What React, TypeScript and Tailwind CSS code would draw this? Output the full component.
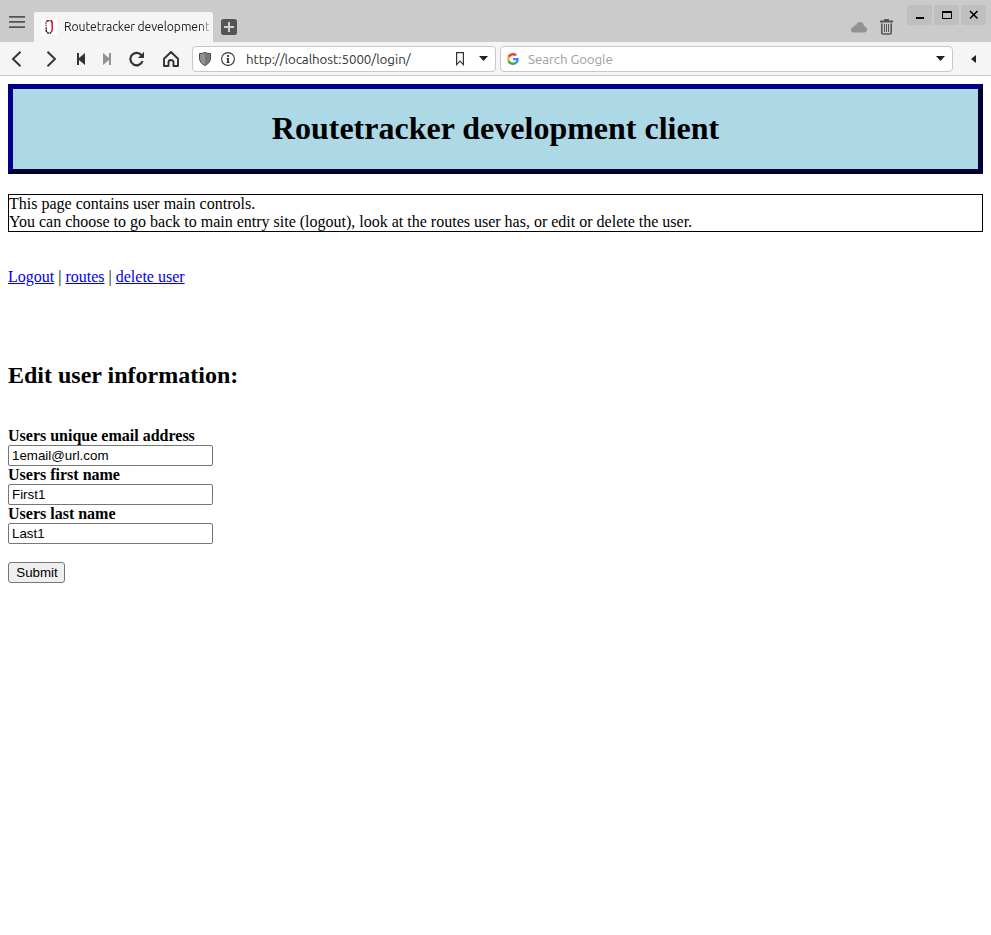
import React from "react";

const uiFont = "font-['Ubuntu','Noto_Sans',sans-serif]";

function TabBar() {
  return (
    <div className="flex h-[42px] w-full items-start bg-[#cbcbcb]">
      <svg className="mt-4 ml-[9px] h-3 w-4 shrink-0" viewBox="0 0 16 12" fill="#555">
        <path d="M0 0h16v1.7H0zM0 5.1h16v1.7H0zM0 10.2h16v1.7H0z" />
      </svg>
      <div className="mt-3 ml-[9px] flex h-[30px] w-[179px] shrink-0 items-center overflow-hidden rounded-t-[2px] bg-[#f5f5f5] pl-[7px]">
        <svg className="h-4 w-4 shrink-0" viewBox="0 0 16 16" fill="none" strokeWidth="1.5">
          <path d="M0 0h16v16H0z" fill="#fff" />
          <path d="M6.500 2L4.800 3.500v2L5.500 8" stroke="#555" strokeDasharray="1.300 .9" />
          <path d="M5.500 1.800h5.500M11 2v2" stroke="#b01530" strokeDasharray="3 .6" />
          <path d="M11.200 3v8L10 13.500" stroke="#e0122c" />
          <path d="M5.200 8.500V12l1.500 2H10" stroke="#401018" strokeDasharray="2 .6" />
        </svg>
        <span className={`${uiFont} ml-[7px] w-[146px] overflow-hidden mask-linear-90 mask-linear-from-93% mask-linear-to-102% whitespace-nowrap text-[12.2px] leading-5 tracking-[-0.08px] text-[#1c1c1c]`}>
          Routetracker development
        </span>
      </div>
      <svg className="mt-[19px] ml-2 h-4 w-4 shrink-0" viewBox="0 0 16 16">
        <rect width="16" height="16" rx="2.5" fill="#555" />
        <path d="M8 3v10M3 8h10" stroke="#d0d0d0" strokeWidth="2" />
      </svg>
      <div className="flex-1" />
      <svg className="mt-[22px] h-[11px] w-4" viewBox="0 0 16 11" fill="#929292">
        <path d="M3 10.5Q0 10.5 0 7.7Q0 5.1 2.7 5Q3 2.8 5 3Q6.3 0 9 0Q12.8.2 13 4.3Q16 4.7 16 7.5Q16 10.5 13 10.5z" />
      </svg>
      <svg className="mt-[19px] ml-[13px] h-4 w-[13px]" viewBox="0 0 13 16" fill="none" stroke="#555">
        <path d="M0 2.5h13M4 1h5" strokeWidth="1.8" />
        <path d="M1.8 4.5v9.2q0 1.3 1.3 1.3h6.8q1.3 0 1.3-1.3V4.5" strokeWidth="1.6" />
        <path d="M4.5 5v8M6.5 5v8M8.5 5v8" strokeWidth="1" />
      </svg>
      <div className="mt-[5px] mr-[5px] ml-[14px] flex gap-[2px]">
        <svg className="h-5 w-[25px] rounded-[3px] bg-[#bfbfbf]" viewBox="0 0 25 20">
          <path d="M9 12h8v2H9z" />
        </svg>
        <svg className="h-5 w-[25px] rounded-[3px] bg-[#bfbfbf]" viewBox="0 0 25 20">
          <path d="M8 6h10v8H8zM9 8v5h8V8z" fillRule="evenodd" />
        </svg>
        <svg className="h-5 w-[25px] rounded-[3px] bg-[#bfbfbf]" viewBox="0 0 25 20" stroke="#000" strokeWidth="1.5">
          <path d="M9 6l7.5 7.5M16.5 6L9 13.5" />
        </svg>
      </div>
    </div>
  );
}

function GoogleMark() {
  return (
    <svg className="ml-[6px] h-3 w-3 shrink-0" viewBox="0 0 48 48">
      <path fill="#EA4335" d="M24 9.5c3.54 0 6.71 1.22 9.21 3.6l6.85-6.85C35.9 2.38 30.47 0 24 0 14.62 0 6.51 5.38 2.56 13.22l7.98 6.19C12.43 13.72 17.74 9.5 24 9.5z" />
      <path fill="#4285F4" d="M46.98 24.55c0-1.57-.15-3.09-.38-4.55H24v9.02h12.94c-.58 2.96-2.26 5.48-4.78 7.18l7.73 6c4.51-4.18 7.09-10.36 7.09-17.65z" />
      <path fill="#FBBC05" d="M10.53 28.59A14.5 14.5 0 0 1 9.77 24c0-1.6.27-3.14.76-4.59l-7.98-6.19A24 24 0 0 0 0 24c0 3.88.92 7.54 2.56 10.78l7.97-6.19z" />
      <path fill="#34A853" d="M24 48c6.48 0 11.93-2.13 15.89-5.81l-7.73-6c-2.15 1.45-4.92 2.3-8.16 2.3-6.26 0-11.57-4.22-13.47-9.91l-7.98 6.19C6.51 42.62 14.62 48 24 48z" />
    </svg>
  );
}

function Toolbar() {
  return (
    <div className="flex h-[34px] w-full items-center border-b border-[#c8c8c8] bg-[#f5f5f5]">
      <svg className="ml-[11px] h-4 w-[11px]" viewBox="0 0 11 16" fill="none" stroke="#333" strokeWidth="1.9">
        <path d="M9.5.8L2 8l7.500 7.200" />
      </svg>
      <svg className="ml-[24px] h-4 w-[11px]" viewBox="0 0 11 16" fill="none" stroke="#333" strokeWidth="1.9">
        <path d="M1.500.8L9 8l-7.500 7.200" />
      </svg>
      <svg className="ml-[20px] h-3 w-[8px]" viewBox="0 0 8 12" fill="#333">
        <path d="M0 0h2v12H0zM8 0v12L2 7V5z" />
      </svg>
      <svg className="ml-[18px] h-3 w-[8px]" viewBox="0 0 8 12" fill="#929292">
        <path d="M8 0H6v12h2zM0 0v12l6-5V5z" />
      </svg>
      <svg className="ml-[18px] h-4 w-4" viewBox="0 0 16 16">
        <path d="M12.500 4.300A6.200 6.200 0 1 0 13.500 10" fill="none" stroke="#333" strokeWidth="2.200" />
        <path d="M15 .700V7H9z" fill="#333" />
      </svg>
      <svg className="ml-[18px] h-4 w-4" viewBox="0 0 16 16" fill="none" stroke="#333" strokeWidth="1.9">
        <path d="M1 7.700L8 1l7 6.700V15h-4.500v-3.500a2.500 2.500 0 0 0-5 0V15H1z" strokeLinejoin="round" />
      </svg>
      <div className="ml-[13px] flex h-[26px] w-[304px] items-center rounded-[4px] border border-[#c8c8c8] bg-white">
        <svg className="ml-[6px] h-[14px] w-3 shrink-0" viewBox="0 0 12 14">
          <path d="M.5 1.500Q4 1.500 6 .500Q8 1.500 11.500 1.500V6Q11.500 11 6 13.500Q.5 11 .5 6z" fill="#929292" stroke="#444" />
          <path d="M6 1.500Q8 2.200 11 2.200V6Q11 10.500 6 12.800z" fill="#777" />
        </svg>
        <svg className="ml-[10px] h-[14px] w-[14px] shrink-0" viewBox="0 0 14 14" fill="none" stroke="#333">
          <circle cx="7" cy="7" r="6.400" strokeWidth="1.100" />
          <path d="M7 3v2M7 6v5" strokeWidth="1.800" />
          <path d="M5.500 6.500H7M5.500 10.500h3" />
        </svg>
        <span className={`${uiFont} mt-[2px] ml-[11px] w-[210px] whitespace-nowrap text-[13.333px] leading-5 tracking-[-0.06px] text-[#333]`}>
          http://localhost:5000/login/
        </span>
        <svg className="h-[14px] w-[8px] shrink-0" viewBox="0 0 8 14" fill="none" stroke="#333" strokeWidth="1.200">
          <path d="M.6.600h6.800v12L4 9.200.6 12.600z" />
        </svg>
        <svg className="ml-[15px] h-[5px] w-[9px] shrink-0" viewBox="0 0 9 5" fill="#222">
          <path d="M0 0h9L4.500 5z" />
        </svg>
      </div>
      <div className="ml-1 flex h-[26px] w-[453px] items-center rounded-[4px] border border-[#c8c8c8] bg-white">
        <GoogleMark />
        <span className={`${uiFont} mt-[2px] ml-[9px] flex-1 whitespace-nowrap text-[13.333px] leading-5 tracking-[-0.1px] text-[#a0a0a0]`}>
          Search Google
        </span>
        <svg className="mr-[7px] h-[5px] w-[9px]" viewBox="0 0 9 5" fill="#222">
          <path d="M0 0h9L4.500 5z" />
        </svg>
      </div>
      <svg className="ml-[18px] h-2 w-[5px]" viewBox="0 0 5 8" fill="#222">
        <path d="M5 0v8L0 4z" />
      </svg>
    </div>
  );
}

function Field({ label, value }: { label: string; value: string }) {
  return (
    <label className="block">
      <span className="block h-[18px] font-bold">{label}</span>
      <input
        className="block h-[21px] w-[205px] rounded-[2px] border border-[#767676] bg-white px-[3px] font-['Liberation_Sans',sans-serif] text-[13.333px] leading-[15px]"
        defaultValue={value}
      />
    </label>
  );
}

export default function App() {
  return (
    <div className="flex h-screen w-full flex-col overflow-hidden bg-white">
      <TabBar />
      <Toolbar />
      <main className="p-2 font-['Liberation_Serif',serif] text-[16px] leading-[18px] text-black">
        <header className="flex h-[90px] items-center justify-center border-[5px] border-t-[#00008b] border-r-[#000033] border-b-[#000033] border-l-[#00008b] bg-[#add8e6] pb-[2px]">
          <h1 className="text-[32px] leading-[36px] font-bold">Routetracker development client</h1>
        </header>
        <p className="mt-5 border border-black">
          This page contains user main controls.
          <br />
          You can choose to go back to main entry site (logout), look at the routes user has, or edit or delete the user.
        </p>
        <nav className="mt-9 text-black">
          <a href="#logout" className="text-[#0000ee] underline">Logout</a>
          {" "}|{" "}
          <a href="#routes" className="text-[#0000ee] underline">routes</a>
          {" "}|{" "}
          <a href="#delete" className="text-[#0000ee] underline">delete user</a>
        </nav>
        <h2 className="mt-[76px] text-[24px] leading-[27px] font-bold">Edit user information:</h2>
        <form className="mt-[38px]" onSubmit={(e) => e.preventDefault()}>
          <Field label="Users unique email address" value="1email@url.com" />
          <Field label="Users first name" value="First1" />
          <Field label="Users last name" value="Last1" />
          <button
            type="submit"
            className="mt-[18px] block h-[21px] w-[57px] rounded-[3px] border border-[#767676] bg-[#efefef] pl-px text-center font-['Liberation_Sans',sans-serif] text-[13.333px] leading-[19px]"
          >
            Submit
          </button>
        </form>
      </main>
    </div>
  );
}
